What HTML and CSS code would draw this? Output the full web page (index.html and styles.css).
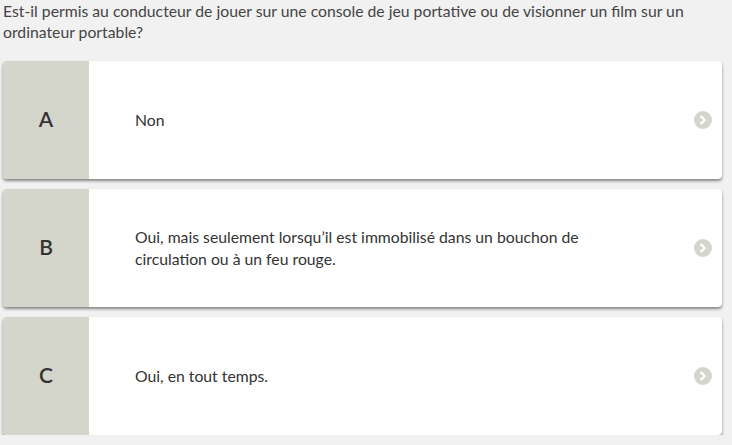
FILE: index.html
```html
<!DOCTYPE html>
<html lang="fr">
<head>
<meta charset="utf-8">
<link rel="stylesheet" href="styles.css">
</head>
<body>
<div class="page">
  <p class="question">Est-il permis au conducteur de jouer sur une console de jeu portative ou de visionner un film sur un ordinateur portable?</p>
  <div class="answers">
    <div class="card">
      <div class="letter">A</div>
      <div class="text">Non</div>
      <div class="arrow"><svg width="18" height="18" viewBox="0 0 18 18"><circle cx="9" cy="9" r="9" fill="#d4d6cc"/><path d="M7.3 5.6 L10.8 9 L7.3 12.4" fill="none" stroke="#fff" stroke-width="2.2" stroke-linecap="round" stroke-linejoin="round"/></svg></div>
    </div>
    <div class="card">
      <div class="letter">B</div>
      <div class="text">Oui, mais seulement lorsqu’il est immobilisé dans un bouchon de circulation ou à un feu rouge.</div>
      <div class="arrow"><svg width="18" height="18" viewBox="0 0 18 18"><circle cx="9" cy="9" r="9" fill="#d4d6cc"/><path d="M7.3 5.6 L10.8 9 L7.3 12.4" fill="none" stroke="#fff" stroke-width="2.2" stroke-linecap="round" stroke-linejoin="round"/></svg></div>
    </div>
    <div class="card">
      <div class="letter">C</div>
      <div class="text">Oui, en tout temps.</div>
      <div class="arrow"><svg width="18" height="18" viewBox="0 0 18 18"><circle cx="9" cy="9" r="9" fill="#d4d6cc"/><path d="M7.3 5.6 L10.8 9 L7.3 12.4" fill="none" stroke="#fff" stroke-width="2.2" stroke-linecap="round" stroke-linejoin="round"/></svg></div>
    </div>
  </div>
</div>
</body>
</html>
```
FILE: styles.css
```css
html, body {
  margin: 0;
  padding: 0;
  background: #f1f1f1;
}
body {
  font-family: Lato, "Open Sans", sans-serif;
  color: #333;
}
.page {
  padding: 0 10px 0 3px;
}
.question {
  margin: 0;
  font-size: 15.75px;
  line-height: 21px;
  color: #444;
}
.answers {
  display: flex;
  flex-direction: column;
  gap: 10px;
  margin-top: 19px;
}
.card {
  display: flex;
  align-items: stretch;
  height: 118px;
  background: #fff;
  border-radius: 4px;
  overflow: hidden;
  box-shadow: 0 2px 3px rgba(0,0,0,0.45);
}
.letter {
  width: 86px;
  flex: none;
  background: #d4d6cc;
  display: flex;
  align-items: center;
  justify-content: center;
  padding-bottom: 4px;
  box-sizing: border-box;
  font-size: 21px;
  font-weight: 600;
  color: #333;
}
.text {
  flex: 1;
  display: flex;
  align-items: center;
  padding-left: 46px;
  padding-right: 100px;
  padding-bottom: 1px;
  font-size: 15.75px;
  line-height: 22px;
  color: #333;
}
.arrow {
  flex: none;
  display: flex;
  align-items: center;
  padding-right: 10px;
}
.arrow svg {
  display: block;
}
```
